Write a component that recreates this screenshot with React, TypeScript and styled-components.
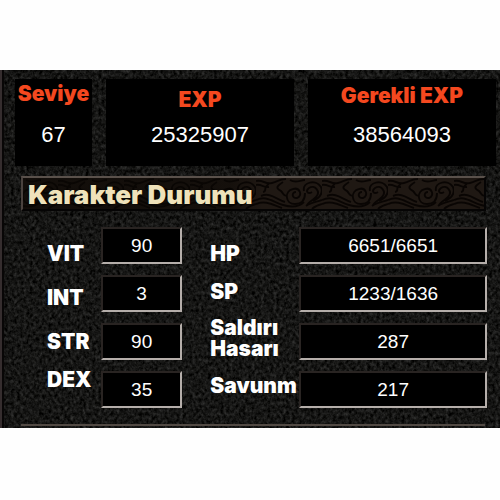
import React from "react";
import styled, { createGlobalStyle } from "styled-components";

const GlobalStyle = createGlobalStyle`
  * { box-sizing: border-box; }
  body { margin: 0; background: #fefefe; }
`;

const heavy = `"Inter", "Liberation Sans", sans-serif`;
const plain = `"Liberation Sans", Arial, sans-serif`;

const Page = styled.main`
  padding: 70px 0;
  font-family: ${plain};
  color: #fff;
`;

const Panel = styled.section`
  position: relative;
  isolation: isolate;
  overflow: hidden;
  background: #151515;
  border-left: 2px solid #352d2e;
  padding: 9px 4px 2px 13px;
`;

const Backdrop = styled.svg`
  position: absolute;
  inset: 0;
  width: 100%;
  height: 100%;
  z-index: -1;
`;

const Summary = styled.div`
  display: grid;
  grid-template-columns: 77fr 188fr 188fr;
  gap: 14px;
`;

const SummaryCell = styled.div<{ $drop: number }>`
  display: grid;
  grid-template-rows: 40px 32px;
  height: 87px;
  background: #000;
  text-align: center;

  label {
    padding-top: ${(p) => p.$drop}px;
    font: 900 21px/24px ${heavy};
    color: #f4481f;
    white-space: nowrap;
  }

  output {
    font-size: 22px;
    line-height: 32px;
  }
`;

const TitleBar = styled.header`
  position: relative;
  isolation: isolate;
  height: 35px;
  margin: 10px 10px 0 6px;
  padding-left: 5px;
  border: 2px solid;
  border-color: #5a514b #050404 #050404 #4a423e;
  background: #100b07;
  overflow: hidden;
`;

const Title = styled.h1`
  margin: 0;
  font: 900 26px/33px ${heavy};
  color: #efe2ba;
  text-shadow: 0 0 2px #000;
`;

const Stats = styled.div`
  display: grid;
  grid-template-columns: 54px 81fr 28px 89px 187fr;
  margin: 16px 9px 0 32px;
`;

const Labels = styled.div<{ $rows: string }>`
  display: grid;
  grid-template-rows: ${(p) => p.$rows};
  align-content: start;
  padding-top: 16px;

  label {
    font: 900 21px/21px ${heavy};
    white-space: nowrap;
  }
`;

const Values = styled.div`
  display: grid;
  gap: 11px;
`;

const Value = styled.output`
  height: 37px;
  border: 2px solid;
  border-color: #292422 #b5aeaa #b5aeaa #292422;
  background: #000;
  font-size: 19px;
  line-height: 34px;
  text-align: center;
`;

const Divider = styled.hr`
  height: 2px;
  margin: 16px 11px 0 6px;
  border: 0;
  background: #514943;
`;

const Stone = () => (
  <Backdrop aria-hidden="true">
    <filter id="stone" x="0" y="0" width="100%" height="100%" colorInterpolationFilters="sRGB">
      <feTurbulence type="fractalNoise" baseFrequency="0.32 0.28" numOctaves={3} seed={8} />
      <feColorMatrix values="0.26 0.12 0 0 -0.105  0.26 0.12 0 0 -0.105  0.26 0.12 0 0 -0.11  0 0 0 0 1" />
    </filter>
    <rect width="100%" height="100%" filter="url(#stone)" />
    <rect width="2" height="100%" fill="#080606" />
  </Backdrop>
);

const Swirls = () => (
  <Backdrop aria-hidden="true">
    <defs>
      <pattern id="clouds" width="66" height="31" patternUnits="userSpaceOnUse" x="35">
        <rect width="66" height="31" fill="#1f1813" />
        <g fill="none" stroke="#090503" strokeWidth="2">
          <path d="M0 3C7 1 9 7 16 5S23 1 30 1M0 7c6-1 8 3 13 2" />
          <path d="M13 6c-7 4-1 7-6 8M27 4c-6 4-8 6-2 9 3 3 2 5 6 5" />
          <path d="M40 14c-5 0-4 7 1 6 6-2 3-11-4-9-9 2-8 15 2 15 9 0 10-7 10-11" />
          <path d="M56 14c-4 3-7-1-3-4 6-4 12 4 7 9-6 6-6 3-9 8M48 13c-2-9 12-12 17-4 3 7-2 11-8 14" />
          <path d="M0 22c10-5 17 2 27 5s16 2 21-3M0 26c10-4 17 1 26 4M5 18c9-4 15 3 24 6M50 28c5-4 11-4 16-6M56 31c3-3 6-4 10-5M34 2c6 4 10 0 15 0" />
        </g>
      </pattern>
      <linearGradient id="shade">
        <stop offset="0" stopColor="#0a0704" stopOpacity="0.6" />
        <stop offset="0.45" stopColor="#0a0704" stopOpacity="0.5" />
        <stop offset="0.52" stopColor="#0a0704" stopOpacity="0" />
      </linearGradient>
    </defs>
    <rect width="100%" height="100%" fill="url(#clouds)" />
    <rect width="100%" height="100%" fill="url(#shade)" />
  </Backdrop>
);

const summary = [
  { id: "level", label: "Seviye", value: "67", drop: 3 },
  { id: "exp", label: "EXP", value: "25325907", drop: 9 },
  { id: "needed", label: "Gerekli EXP", value: "38564093", drop: 5 },
];

const attributes = [
  ["VIT", "90"],
  ["INT", "3"],
  ["STR", "90"],
  ["DEX", "35"],
];

const combat = [
  ["HP", "6651/6651"],
  ["SP", "1233/1636"],
  ["Saldırı\nHasarı", "287"],
  ["Savunm", "217"],
];

const Group = ({ name, items, rows }: { name: string; items: string[][]; rows: string }) => (
  <>
    <Labels $rows={rows}>
      {items.map(([label], i) => (
        <label key={label} htmlFor={`${name}-${i}`}>
          {label.split("\n").map((line, n) => (
            <React.Fragment key={line}>
              {n > 0 && <br />}
              {line}
            </React.Fragment>
          ))}
        </label>
      ))}
    </Labels>
    <Values>
      {items.map(([label, value], i) => (
        <Value key={label} id={`${name}-${i}`}>
          {value}
        </Value>
      ))}
    </Values>
  </>
);

export default function App() {
  return (
    <Page>
      <GlobalStyle />
      <Panel>
        <Stone />
        <Summary>
          {summary.map((s) => (
            <SummaryCell key={s.id} $drop={s.drop}>
              <label htmlFor={s.id}>{s.label}</label>
              <output id={s.id}>{s.value}</output>
            </SummaryCell>
          ))}
        </Summary>
        <TitleBar>
          <Swirls />
          <Title>Karakter Durumu</Title>
        </TitleBar>
        <Stats>
          <Group name="attribute" items={attributes} rows="44px 44px 38px 24px" />
          <span />
          <Group name="combat" items={combat} rows="38px 36px 58px 24px" />
        </Stats>
        <Divider />
      </Panel>
    </Page>
  );
}
